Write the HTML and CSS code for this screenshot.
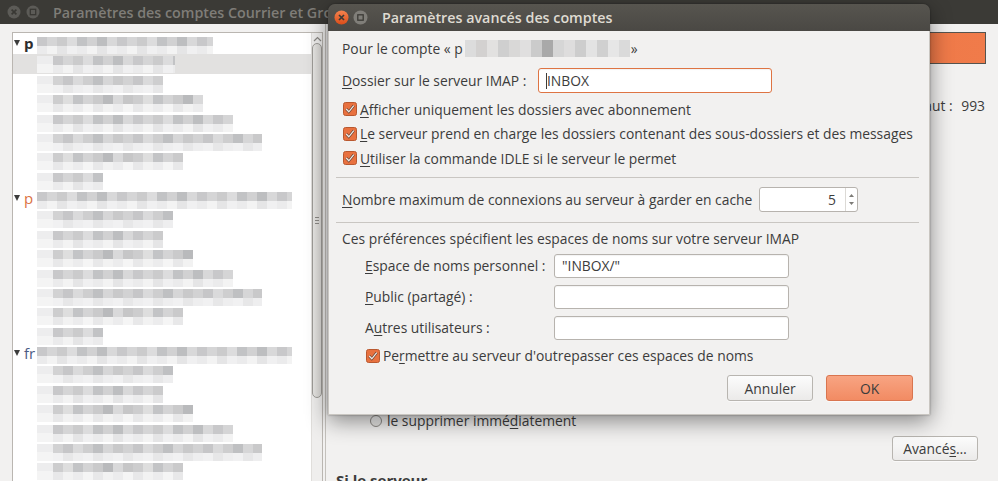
FILE: index.html
```html
<!DOCTYPE html>
<html lang="fr">
<head>
<meta charset="utf-8">
<title>Paramètres avancés des comptes</title>
<link rel="stylesheet" href="styles.css">
</head>
<body>
<div class="win">
  <div class="titlebar">
    <span class="tb-btn"><svg width="14" height="14" viewBox="0 0 14 14"><circle cx="7" cy="7" r="6.5" fill="#5c5b57"/><path d="M4.6 4.6 L9.4 9.4 M9.4 4.6 L4.6 9.4" stroke="#393834" stroke-width="1.6"/></svg></span>
    <span class="tb-btn"><svg width="14" height="14" viewBox="0 0 14 14"><circle cx="7" cy="7" r="6.5" fill="#5c5b57"/><rect x="4.3" y="4.3" width="5.4" height="5.4" fill="none" stroke="#393834" stroke-width="1.3"/></svg></span>
    <span class="tb-title">Paramètres des comptes Courrier et Groupes</span>
  </div>
  <div class="main">
    <div class="leftpane">
      <div class="tree">
        <div class="tree-list">
          <div class="trow head"><span class="tri"></span><span class="hlabel h1">p</span><span class="mz hz" style="width:176px"></span></div>
          <div class="trow child sel"><span class="ico"></span><span class="mz" style="width:122px"></span></div>
          <div class="trow child"><span class="ico"></span><span class="mz v2" style="width:110px"></span></div>
          <div class="trow child"><span class="ico"></span><span class="mz v3" style="width:150px"></span></div>
          <div class="trow child"><span class="ico"></span><span class="mz" style="width:180px"></span></div>
          <div class="trow child"><span class="ico"></span><span class="mz v2" style="width:209px"></span></div>
          <div class="trow child"><span class="ico"></span><span class="mz v3" style="width:130px"></span></div>
          <div class="trow child"><span class="ico"></span><span class="mz" style="width:50px"></span></div>

          <div class="trow head"><span class="tri"></span><span class="hlabel h2">p</span><span class="mz hz" style="width:255px"></span></div>
          <div class="trow child"><span class="ico"></span><span class="mz v2" style="width:120px"></span></div>
          <div class="trow child"><span class="ico"></span><span class="mz" style="width:110px"></span></div>
          <div class="trow child"><span class="ico"></span><span class="mz v3" style="width:140px"></span></div>
          <div class="trow child"><span class="ico"></span><span class="mz" style="width:180px"></span></div>
          <div class="trow child"><span class="ico"></span><span class="mz v2" style="width:209px"></span></div>
          <div class="trow child"><span class="ico"></span><span class="mz v3" style="width:130px"></span></div>
          <div class="trow child"><span class="ico"></span><span class="mz" style="width:50px"></span></div>

          <div class="trow head"><span class="tri"></span><span class="hlabel h3">fr</span><span class="mz hz" style="width:255px"></span></div>
          <div class="trow child"><span class="ico"></span><span class="mz v2" style="width:120px"></span></div>
          <div class="trow child"><span class="ico"></span><span class="mz" style="width:110px"></span></div>
          <div class="trow child"><span class="ico"></span><span class="mz v3" style="width:140px"></span></div>
          <div class="trow child"><span class="ico"></span><span class="mz" style="width:180px"></span></div>
          <div class="trow child"><span class="ico"></span><span class="mz v2" style="width:209px"></span></div>
          <div class="trow child"><span class="ico"></span><span class="mz v3" style="width:130px"></span></div>
        </div>
        <div class="scrollbar">
          <span class="sb-arrow"><svg width="9" height="6" viewBox="0 0 9 6"><path d="M1 5 L4.5 1.5 L8 5" fill="none" stroke="#8a8884" stroke-width="1.2"/></svg></span>
          <span class="sb-thumb"><span class="grip"></span></span>
        </div>
      </div>
    </div>
    <div class="rightpane">
      <div class="banner"></div>
      <div class="port-row">Port par défaut : <span class="port-val">993</span></div>
      <div class="radio-row"><span class="radio"></span><span>le supprimer immé<u>d</u>iatement</span></div>
      <div class="adv-row"><button class="btn adv">Avancé<u>s</u>…</button></div>
      <div class="section-title">Si le serveur</div>
    </div>
  </div>
</div>

<div class="dialog">
  <div class="dlg-title">
    <span class="dbtn"><svg width="15" height="15" viewBox="0 0 15 15"><defs><linearGradient id="cg" x1="0" y1="0" x2="0" y2="1"><stop offset="0" stop-color="#f4834f"/><stop offset="1" stop-color="#dc4d19"/></linearGradient></defs><circle cx="7.5" cy="7.5" r="7" fill="url(#cg)"/><path d="M5 5 L10 10 M10 5 L5 10" stroke="#3b3a36" stroke-width="1.7"/></svg></span>
    <span class="dbtn"><svg width="15" height="15" viewBox="0 0 15 15"><circle cx="7.5" cy="7.5" r="7" fill="#807e79"/><rect x="4.8" y="4.8" width="5.4" height="5.4" fill="none" stroke="#3b3a36" stroke-width="1.3"/></svg></span>
    <span class="dlg-title-text">Paramètres avancés des comptes</span>
  </div>
  <div class="dlg-body">
    <div class="line account">Pour le compte « p<span class="blur"></span> »</div>
    <div class="line folder-row">
      <span class="lbl-folder"><u>D</u>ossier sur le serveur IMAP :</span>
      <span class="field focus"><span class="caret"></span>INBOX</span>
    </div>
    <div class="check-row">
      <svg class="cb" width="14" height="14" viewBox="0 0 14 14"><rect x="0.5" y="0.5" width="13" height="13" rx="2" fill="#e8713f" stroke="#b9582f"/><path d="M3.2 7 L5.8 9.8 L10.8 3.6" fill="none" stroke="#6b4332" stroke-width="2.6"/><path d="M3.2 7 L5.8 9.8 L10.8 3.6" fill="none" stroke="#efe9e5" stroke-width="1.3"/></svg>
      <span><u>A</u>fficher uniquement les dossiers avec abonnement</span>
    </div>
    <div class="check-row">
      <svg class="cb" width="14" height="14" viewBox="0 0 14 14"><rect x="0.5" y="0.5" width="13" height="13" rx="2" fill="#e8713f" stroke="#b9582f"/><path d="M3.2 7 L5.8 9.8 L10.8 3.6" fill="none" stroke="#6b4332" stroke-width="2.6"/><path d="M3.2 7 L5.8 9.8 L10.8 3.6" fill="none" stroke="#efe9e5" stroke-width="1.3"/></svg>
      <span><u>L</u>e serveur prend en charge les dossiers contenant des sous-dossiers et des messages</span>
    </div>
    <div class="check-row">
      <svg class="cb" width="14" height="14" viewBox="0 0 14 14"><rect x="0.5" y="0.5" width="13" height="13" rx="2" fill="#e8713f" stroke="#b9582f"/><path d="M3.2 7 L5.8 9.8 L10.8 3.6" fill="none" stroke="#6b4332" stroke-width="2.6"/><path d="M3.2 7 L5.8 9.8 L10.8 3.6" fill="none" stroke="#efe9e5" stroke-width="1.3"/></svg>
      <span><u>U</u>tiliser la commande IDLE si le serveur le permet</span>
    </div>
    <div class="sep sep1"></div>
    <div class="line conn-row">
      <span class="lbl-conn"><u>N</u>ombre maximum de connexions au serveur à garder en cache</span>
      <span class="spin"><span class="spin-val">5</span><span class="spin-arrows"><svg width="7" height="17" viewBox="0 0 7 17"><path d="M1 6 L3.5 3 L6 6 Z" fill="#7d7b77"/><path d="M1 11 L3.5 14 L6 11 Z" fill="#7d7b77"/></svg></span></span>
    </div>
    <div class="sep sep2"></div>
    <div class="line ns-intro">Ces préférences spécifient les espaces de noms sur votre serveur IMAP</div>
    <div class="ns-grid">
      <span class="ns-lbl"><u>E</u>space de noms personnel :</span><span class="field">"INBOX/"</span>
      <span class="ns-lbl"><u>P</u>ublic (partagé) :</span><span class="field"></span>
      <span class="ns-lbl">A<u>u</u>tres utilisateurs :</span><span class="field"></span>
    </div>
    <div class="check-row ns-check">
      <svg class="cb" width="14" height="14" viewBox="0 0 14 14"><rect x="0.5" y="0.5" width="13" height="13" rx="2" fill="#e8713f" stroke="#b9582f"/><path d="M3.2 7 L5.8 9.8 L10.8 3.6" fill="none" stroke="#6b4332" stroke-width="2.6"/><path d="M3.2 7 L5.8 9.8 L10.8 3.6" fill="none" stroke="#efe9e5" stroke-width="1.3"/></svg>
      <span>Pe<u>r</u>mettre au serveur d'outrepasser ces espaces de noms</span>
    </div>
    <div class="btn-row">
      <button class="btn cancel">Annuler</button>
      <button class="btn ok">OK</button>
    </div>
  </div>
</div>
</body>
</html>
```

FILE: styles.css
```css
* { box-sizing: border-box; }
html, body { margin: 0; padding: 0; }
body {
  width: 998px;
  height: 481px;
  overflow: hidden;
  position: relative;
  background: #f2f1f0;
  font-family: "Open Sans", "DejaVu Sans", sans-serif;
  font-size: 13.85px;
  color: #3c3c3c;
}
u { text-decoration: underline; text-underline-offset: 2px; text-decoration-thickness: 1px; }

/* background window */
.win { display: flex; flex-direction: column; height: 481px; }
.titlebar {
  flex: none;
  height: 24px;
  background: #3b3a36;
  display: flex;
  align-items: center;
  padding-left: 7px;
  gap: 5px;
}
.tb-btn { width: 14px; height: 14px; display: block; }
.tb-btn svg { display: block; }
.tb-title {
  margin-left: 8px;
  color: #7f7d78;
  font-weight: 600;
  font-size: 14.3px;
  white-space: nowrap;
}
.main { flex: 1; display: flex; min-height: 0; }
.leftpane {
  flex: none;
  width: 326px;
  padding: 8px 2px 0 12px;
  border-right: 1px solid #c4c1bc;
  display: flex;
}
.tree {
  flex: 1;
  background: #fff;
  border: 1px solid #bab6b1;
  border-bottom: none;
  display: flex;
}
.tree-list { flex: 1; padding-top: 2px; }
.trow { height: 19.375px; display: flex; align-items: stretch; }
.trow.head { padding-left: 1px; align-items: center; }
.tri {
  width: 0; height: 0;
  border-left: 3.5px solid transparent;
  border-right: 3.5px solid transparent;
  border-top: 6px solid #3c3c3c;
  margin-right: 4px;
  margin-top: -4px;
}
.hlabel { width: 13px; font-size: 15px; line-height: 19px; margin-top: -3px; }
.h1 { font-weight: 700; color: #2e2e2e; }
.h2 { color: #db7243; }
.h3 { color: #4b5b84; }
.hz { height: 19.375px; }
.trow.child { padding-left: 24px; }
.trow.sel { background: #e2e1e0; }
.ico {
  width: 16px;
  background:
    linear-gradient(#ededee, #ededee) 0 2px / 100% 8px no-repeat,
    linear-gradient(#f4f4f4, #f4f4f4) 0 10px / 100% 9px no-repeat;
}
.mz {
  display: block;
  background:
    repeating-linear-gradient(90deg, #c8c8ca 0 10px, #d5d5d6 10px 20px, #cbcbcc 20px 30px, #dcdcdd 30px 40px, #c2c3c5 40px 50px, #d1d1d2 50px 60px, #bdbec0 60px 70px, #d8d8d9 70px 80px) 0 2px / 100% 9px no-repeat,
    repeating-linear-gradient(90deg, #ebebec 0 10px, #f3f3f3 10px 20px, #e5e5e6 20px 30px, #f0f0f1 30px 40px) 0 11px / 100% 8px no-repeat;
}
.mz.v2 {
  background:
    repeating-linear-gradient(90deg, #d2d2d3 0 10px, #c6c6c8 10px 20px, #dadadb 20px 30px, #cececf 30px 40px, #bfc0c2 40px 50px, #d6d6d7 50px 60px, #c9c9ca 60px 70px) 0 2px / 100% 9px no-repeat,
    repeating-linear-gradient(90deg, #f1f1f2 0 10px, #e7e7e8 10px 20px, #eeeeef 20px 30px) 0 11px / 100% 8px no-repeat;
}
.mz.v3 {
  background:
    repeating-linear-gradient(90deg, #cdcdce 0 10px, #dedede 10px 20px, #c3c4c6 20px 30px, #d4d4d5 30px 40px, #cacacb 40px 50px, #b9babc 50px 60px, #d9d9da 60px 70px, #c6c6c7 70px 80px) 0 2px / 100% 9px no-repeat,
    repeating-linear-gradient(90deg, #e8e8e9 0 10px, #f2f2f2 10px 20px, #ececed 20px 30px, #f5f5f5 30px 40px) 0 11px / 100% 8px no-repeat;
}
.scrollbar {
  flex: none;
  width: 11px;
  background: #efeeed;
  border-left: 1px solid #e0dedb;
  display: flex;
  flex-direction: column;
  align-items: center;
}
.sb-arrow { display: block; height: 10px; padding-top: 3px; }
.sb-arrow svg { display: block; }
.sb-thumb {
  width: 10px;
  height: 355px;
  border: 1px solid #9d9b97;
  border-radius: 5px;
  background: linear-gradient(90deg, #e7e6e4, #d9d7d4);
  display: flex;
  align-items: center;
  justify-content: center;
}
.grip {
  width: 4px;
  height: 7px;
  background: repeating-linear-gradient(#8b8985 0 1px, transparent 1px 3px);
}

.rightpane {
  flex: 1;
  display: flex;
  flex-direction: column;
  padding: 8px 12px 0 10px;
  min-width: 0;
}
.banner {
  flex: none;
  height: 32px;
  border: 1px solid #55544f;
  background: linear-gradient(90deg, #e5683a, #f07b4a);
}
.port-row {
  margin-top: 32px;
  height: 20px;
  line-height: 20px;
  text-align: right;
  padding-right: 1px;
  white-space: nowrap;
}
.port-val { margin-left: 5px; }
.radio-row {
  margin-top: 295px;
  height: 20px;
  display: flex;
  align-items: center;
  padding-left: 34px;
  gap: 5px;
}
.radio {
  width: 12px; height: 12px;
  border-radius: 50%;
  border: 1px solid #8f8c88;
  background: linear-gradient(#f9f9f9, #e4e3e1);
}
.adv-row { margin-top: 6px; display: flex; justify-content: flex-end; padding-right: 8px; }
.section-title { margin-top: 9px; font-weight: 700; font-size: 15px; line-height: 20px; }

.btn {
  font-family: inherit;
  font-size: 13.85px;
  color: #3c3c3c;
  border: 1px solid #b8b5b0;
  border-radius: 3px;
  background: linear-gradient(#fcfcfc, #ebeae9);
  padding: 0;
  height: 26px;
  box-shadow: 0 1px 0 rgba(255,255,255,0.6);
}
.btn.adv { width: 86px; height: 25px; }

/* dialog */
.dialog {
  position: absolute;
  left: 328px;
  top: 4px;
  width: 602px;
  height: 411px;
  display: flex;
  flex-direction: column;
  border-radius: 7px 7px 0 0;
  box-shadow: 0 6px 22px rgba(0,0,0,0.45), 0 0 2px rgba(0,0,0,0.4);
}
.dlg-title {
  flex: none;
  height: 27px;
  background: linear-gradient(#57554f, #4a4844);
  border-radius: 7px 7px 0 0;
  display: flex;
  align-items: center;
  padding-left: 6px;
  gap: 4px;
}
.dbtn { display: block; width: 15px; height: 15px; }
.dbtn svg { display: block; }
.dlg-title-text {
  margin-left: 10px;
  color: #dfdbd2;
  font-weight: 600;
  font-size: 14.3px;
  white-space: nowrap;
}
.dlg-body {
  flex: 1;
  background: #f2f1f0;
  border: 1px solid #c9c6c1;
  border-top: none;
  padding: 5px 16px 0 13px;
  display: flex;
  flex-direction: column;
}
.line { display: flex; align-items: center; white-space: nowrap; }
.account { height: 24px; }
.blur {
  display: inline-block;
  width: 165px;
  height: 17px;
  margin: 0 1px 0 2px;
  background:
    repeating-linear-gradient(90deg, #dcdcdc 0 11px, #d3d1d0 11px 22px, #e2e1e0 22px 33px, #cfcfcf 33px 44px, #d9d8d7 44px 55px, #e0dfdf 55px 66px, #cbcbcb 66px 77px, #a9a9a9 77px 88px, #d6d6d6 88px 99px, #dedddd 99px 110px, #cdcdcd 110px 121px, #e3e3e3 121px 132px, #d0d0d0 132px 143px, #e6e6e6 143px 154px, #dadada 154px 165px);
}
.folder-row { margin-top: 8px; height: 25px; }
.lbl-folder { flex: 0 0 196px; }
.field {
  display: flex;
  align-items: center;
  height: 24px;
  background: #fff;
  border: 1px solid #b7b3ae;
  border-radius: 3px;
  padding-left: 7px;
  box-shadow: inset 0 1px 1px rgba(0,0,0,0.05);
  white-space: nowrap;
}
.field.focus { width: 234px; height: 25px; border-color: #de7443; }
.caret { width: 1px; height: 16px; background: #3c3c3c; }
.check-row { display: flex; align-items: center; height: 24.5px; gap: 3px; white-space: nowrap; }
.folder-row + .check-row { margin-top: 4px; }
.cb { flex: none; margin-left: 1px; }
.sep {
  height: 1px;
  background: #c9c6c2;
  margin-left: -6px;
  margin-right: -6px;
  flex: none;
}
.sep1 { margin-top: 6px; }
.conn-row { margin-top: 9px; height: 25px; }
.lbl-conn { flex: 0 0 417px; }
.spin {
  width: 99px;
  height: 25px;
  background: #fff;
  border: 1px solid #b7b3ae;
  border-radius: 3px;
  display: flex;
  align-items: center;
}
.spin-val { flex: 1; text-align: right; padding-right: 9px; }
.spin-arrows {
  width: 12px;
  height: 100%;
  border-left: 1px solid #dcdad6;
  display: flex;
  align-items: center;
  justify-content: center;
}
.spin-arrows svg { display: block; }
.sep2 { margin-top: 10px; }
.ns-intro { margin-top: 5px; height: 22px; }
.ns-grid {
  margin-top: 4px;
  padding-left: 23px;
  display: grid;
  grid-template-columns: 189px 235px;
  grid-auto-rows: 24px;
  row-gap: 7px;
  align-items: center;
}
.ns-lbl { white-space: nowrap; }
.ns-check { margin-top: 4px; padding-left: 23px; }
.btn-row {
  margin-top: 7px;
  display: flex;
  justify-content: flex-end;
  gap: 13px;
}
.btn.cancel { width: 86px; }
.btn.ok {
  width: 87px;
  background: linear-gradient(#f8a482, #f28b63);
  border-color: #d9754f;
}
```
